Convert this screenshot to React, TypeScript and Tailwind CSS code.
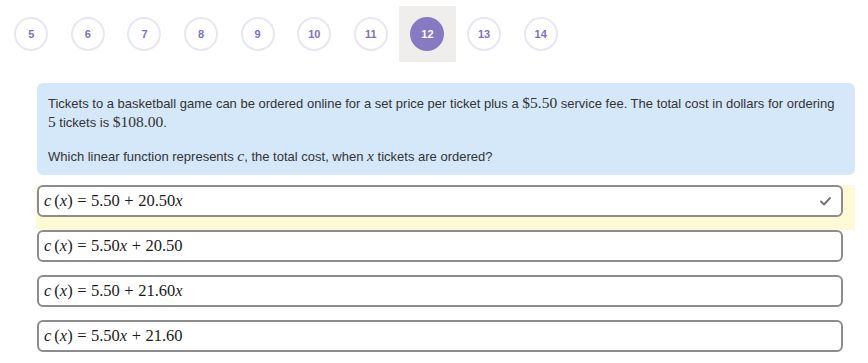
import { Fragment } from 'react'

const pages = [5, 6, 7, 8, 9, 10, 11, 12, 13, 14]
const current = 12

type Part = { t: string; i?: boolean; op?: boolean }

const options: { parts: Part[]; selected?: boolean }[] = [
  {
    parts: [{ t: 'c', i: true }, { t: '(' }, { t: 'x', i: true }, { t: ')' }, { t: '=', op: true }, { t: '5.50' }, { t: '+', op: true }, { t: '20.50' }, { t: 'x', i: true }],
    selected: true,
  },
  {
    parts: [{ t: 'c', i: true }, { t: '(' }, { t: 'x', i: true }, { t: ')' }, { t: '=', op: true }, { t: '5.50' }, { t: 'x', i: true }, { t: '+', op: true }, { t: '20.50' }],
  },
  {
    parts: [{ t: 'c', i: true }, { t: '(' }, { t: 'x', i: true }, { t: ')' }, { t: '=', op: true }, { t: '5.50' }, { t: '+', op: true }, { t: '21.60' }, { t: 'x', i: true }],
  },
  {
    parts: [{ t: 'c', i: true }, { t: '(' }, { t: 'x', i: true }, { t: ')' }, { t: '=', op: true }, { t: '5.50' }, { t: 'x', i: true }, { t: '+', op: true }, { t: '21.60' }],
  },
]

const M = ({ children, i }: { children: React.ReactNode; i?: boolean }) => (
  <span className={`font-['Liberation_Serif',serif] text-[15.5px] leading-[15px] ${i ? 'italic' : ''}`}>{children}</span>
)

const App = () => {
  return (
    <div className="w-[868px] h-[363px] bg-white overflow-hidden font-['Liberation_Sans',Arial,sans-serif] text-[#333]">
      <nav className="flex pl-[3px] pt-[6px]">
        {pages.map((p) => (
          <div
            key={p}
            className={`w-[56.6px] h-[56px] flex items-center justify-center ${
              p === current ? 'bg-[#f0eeec]' : ''
            }`}>
            <div
              className={`w-[34px] h-[34px] rounded-full flex items-center justify-center text-[11px] font-bold ${
                p === current
                  ? 'bg-[#8779c2] text-white'
                  : 'border-2 border-[#e8e7ef] text-[#7d70c0]'
              }`}>
              {p}
            </div>
          </div>
        ))}
      </nav>

      <section className="ml-[37px] mr-[13px] mt-[21px] bg-[#d5e8f9] rounded-md px-[11px] pt-[11px] pb-[9px] text-[13px] leading-[19px]">
        <p>
          Tickets to a basketball game can be ordered online for a set price per ticket plus a <M>$5.50</M> service
          fee. The total cost in dollars for ordering <M>5</M> tickets is <M>$108.00</M>.
        </p>
        <p className="mt-[15px]">
          Which linear function represents <M i>c</M>, the total cost, when <M i>x</M> tickets are ordered?
        </p>
      </section>

      <div className="mt-[10px] ml-[36px] mr-[13px]">
        {options.map((o, idx) => (
          <div key={idx} className={`pb-[13px] pr-[12px] pl-[1px] ${o.selected ? 'bg-[#fdfbd6]' : ''}`}>
            <div className="h-[32px] border-2 border-[#8c8c8c] rounded-md bg-white flex items-center pl-[5px] pr-[8px]">
              <span className="text-[#1a1a1a] flex-1 whitespace-pre font-['Liberation_Serif',serif] text-[16.5px]">
                {o.parts.map((p, k) => (
                  <Fragment key={k}>
                    <span
                      className={`${p.i ? 'italic' : ''} ${p.op ? 'mx-[4.5px]' : ''} ${
                        p.t === '(' ? 'ml-[3px]' : ''
                      }`}>
                      {p.t}
                    </span>
                  </Fragment>
                ))}
              </span>
              {o.selected && (
                <svg width="11" height="9" viewBox="0 0 11 9" fill="none" className="mr-[2px]">
                  <path d="M1 4.5 L4 7.5 L10 1" stroke="#777" strokeWidth="2" strokeLinecap="round" strokeLinejoin="round" />
                </svg>
              )}
            </div>
          </div>
        ))}
      </div>
    </div>
  )
}

export default App
